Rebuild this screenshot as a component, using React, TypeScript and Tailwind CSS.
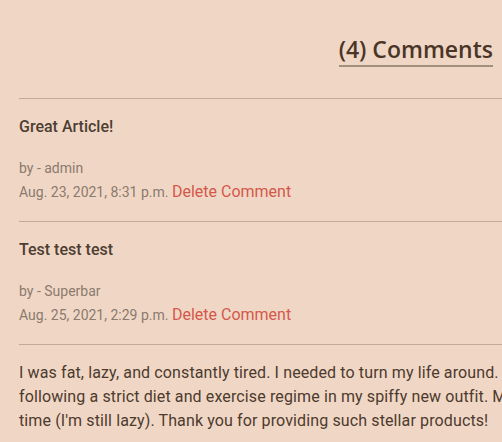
import React from "react";

const comments = [
  { title: "Great Article!", author: "admin", date: "Aug. 23, 2021, 8:31 p.m." },
  { title: "Test test test", author: "Superbar", date: "Aug. 25, 2021, 2:29 p.m." },
];

export default function App() {
  return (
    <div className="w-[502px] h-[442px] overflow-hidden bg-[#f0d7c5]" style={{ fontFamily: "Roboto, sans-serif" }}>
      <div className="w-[560px] pl-[19px] pt-[34px]">
        <div className="w-[474px] flex justify-end">
          <h2
            className="text-[23px] leading-[30px] font-semibold text-[#4a3527] border-b-2 border-[#a0927a] pb-[1px]"
            style={{ fontFamily: "'Open Sans', sans-serif" }}
          >
            (4) Comments
          </h2>
        </div>
        <div className="mt-[31px]">
          {comments.map((c) => (
            <div key={c.title} className="border-t border-[#c3a997] pt-[16px] pb-[17px]">
              <div className="text-[16px] leading-[24px] font-medium text-[#4d3d32]">{c.title}</div>
              <div className="mt-[18px] text-[14px] leading-[23px] text-[#8b7a6e]">by - {c.author}</div>
              <div className="text-[14px] leading-[23px] text-[#8b7a6e]">
                {c.date} <span className="text-[16px] text-[#d4574b]">Delete Comment</span>
              </div>
            </div>
          ))}
          <div className="border-t border-[#c3a997] pt-[16px] text-[16px] leading-[24px] tracking-[0.12px] text-[#4d3a2e] whitespace-nowrap">
            I was fat, lazy, and constantly tired. I needed to turn my life around. I started
            <br />
            following a strict diet and exercise regime in my spiffy new outfit. My
            <br />
            time (I'm still lazy). Thank you for providing such stellar products!
          </div>
        </div>
      </div>
    </div>
  );
}
